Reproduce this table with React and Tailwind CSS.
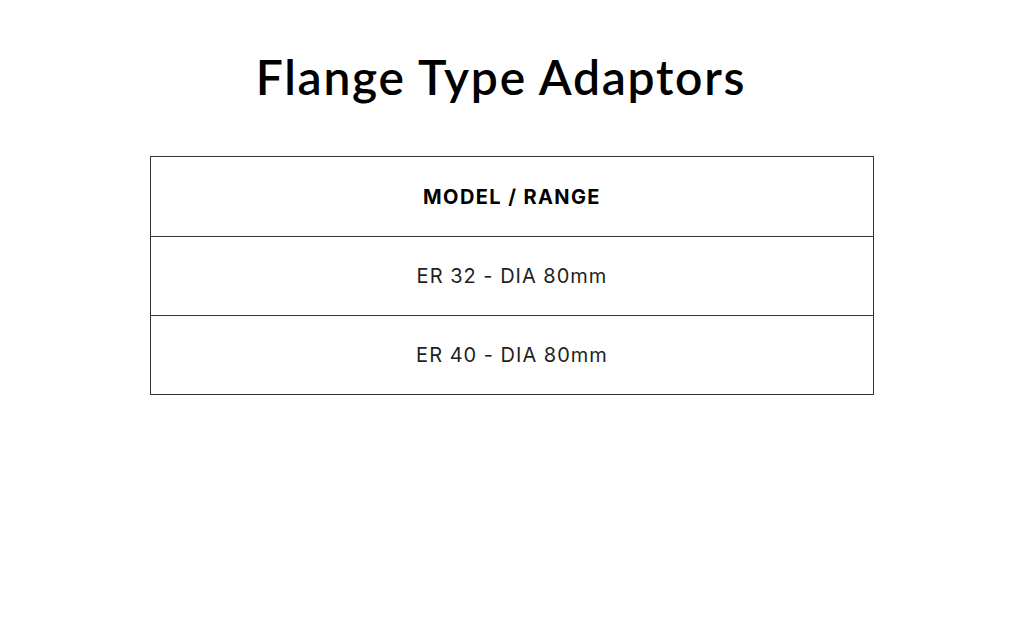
export default function App() {
  const rows = ["ER 32 - DIA 80mm", "ER 40 - DIA 80mm"];

  return (
    <div className="w-[1024px] h-[630px] bg-white flex flex-col items-center">
      <h1 className="mt-[47px] mr-[22px] text-[48px] leading-[60px] font-semibold text-black tracking-[1.7px] font-['Lato','Noto_Sans',sans-serif]">
        Flange Type Adaptors
      </h1>

      <table className="mt-[49px] w-[724px] border-collapse border border-[#333] font-['Inter','Noto_Sans',sans-serif] text-[#1f1f1f]">
        <thead>
          <tr>
            <th className="h-[80px] border border-[#333] text-[20px] font-bold text-black text-center tracking-[1.4px]">
              MODEL / RANGE
            </th>
          </tr>
        </thead>
        <tbody>
          {rows.map((row) => (
            <tr key={row}>
              <td className="h-[79px] border border-[#333] text-[20px] text-center tracking-[1px]">
                {row}
              </td>
            </tr>
          ))}
        </tbody>
      </table>
    </div>
  );
}
